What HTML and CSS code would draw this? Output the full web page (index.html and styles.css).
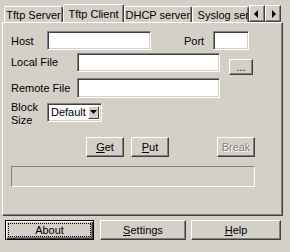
FILE: index.html
```html
<!DOCTYPE html>
<html lang="en">
<head>
  <meta charset="UTF-8" />
  <title>Tftpd</title>
  <link rel="stylesheet" href="styles.css">
</head>
<body>
  <div class="window">
    <div class="tabs">
      <div class="tab t-server">Tftp Server</div>
      <div class="tab t-client selected">Tftp Client</div>
      <div class="tab t-dhcp">DHCP server</div>
      <div class="tab t-syslog">Syslog server</div>
    </div>
    <div class="tab-scroll">
      <div class="scroll-btn">
        <svg width="14" height="14" viewBox="0 0 14 14"><polygon points="4,7 8,3 8,11" fill="#000"/></svg>
      </div>
      <div class="scroll-btn">
        <svg width="14" height="14" viewBox="0 0 14 14"><polygon points="6,3 10,7 6,11" fill="#000"/></svg>
      </div>
    </div>

    <div class="panel">
      <div class="row row-host">
        <label class="lbl lbl-host">Host</label>
        <input class="field host-field" type="text">
        <label class="lbl lbl-port">Port</label>
        <input class="field port-field" type="text">
      </div>
      <div class="row row-local">
        <label class="lbl lbl-file">Local File</label>
        <input class="field file-field" type="text">
        <button class="btn browse-btn">...</button>
      </div>
      <div class="row row-remote">
        <label class="lbl lbl-file">Remote File</label>
        <input class="field file-field remote" type="text">
      </div>
      <div class="row row-block">
        <label class="lbl lbl-block">Block<br>Size</label>
        <div class="combo">
          <span class="combo-text">Default</span>
          <span class="combo-btn">
            <svg width="9" height="5" viewBox="0 0 9 5"><polygon points="1,0 8,0 4.5,4" fill="#000"/></svg>
          </span>
        </div>
      </div>
      <div class="row row-actions">
        <button class="btn act-btn"><u>G</u>et</button>
        <button class="btn act-btn put-btn"><u>P</u>ut</button>
        <button class="btn act-btn break-btn" disabled>Break</button>
      </div>
      <div class="progress"></div>
    </div>

    <div class="footer">
      <button class="btn foot-btn about-btn"><span class="focus">About</span></button>
      <button class="btn foot-btn settings-btn"><u>S</u>ettings</button>
      <button class="btn foot-btn help-btn"><u>H</u>elp</button>
    </div>
  </div>
</body>
</html>
```

FILE: styles.css
```css
body {
  margin: 0;
  background-color: #d4d0c8;
  font-family: 'Liberation Sans', Arial, sans-serif;
  font-size: 11px;
  color: #000;
}

.window {
  position: relative;
  width: 290px;
  height: 252px;
}

/* tab strip */
.tabs {
  display: flex;
  align-items: flex-end;
  height: 22px;
  padding-left: 4px;
  width: 245px;
  overflow: hidden;
}

.tab {
  box-sizing: border-box;
  height: 16px;
  padding-top: 2px;
  text-align: center;
  white-space: nowrap;
  overflow: hidden;
  border-left: 1px solid #fff;
  border-top: 1px solid #fff;
  border-right: 1px solid #404040;
  box-shadow: inset -1px 0 #808080;
  border-radius: 2px 2px 0 0;
}

.t-server { width: 62px; }
.t-client { width: 64px; }
.t-dhcp { width: 71px; }
.t-syslog { width: 60px; text-align: left; padding-left: 5px; }

.tab.selected {
  position: relative;
  z-index: 1;
  height: 19px;
  margin-bottom: -1px;
  padding-top: 3px;
  background-color: #d4d0c8;
}

.tab-scroll {
  position: absolute;
  left: 249px;
  top: 5px;
  display: flex;
}

.scroll-btn {
  box-sizing: border-box;
  width: 16px;
  height: 17px;
  border: 1px solid;
  border-color: #fff #404040 #404040 #fff;
  box-shadow: inset -1px -1px #808080;
  display: flex;
  align-items: center;
  justify-content: center;
}

/* tab page */
.panel {
  box-sizing: border-box;
  margin-left: 2px;
  width: 281px;
  height: 194px;
  padding: 8px 0 0 8px;
  border: 1px solid;
  border-color: #fff #404040 #404040 #fff;
  box-shadow: inset -1px -1px #808080;
}

.row {
  display: flex;
  align-items: center;
}

.lbl {
  white-space: nowrap;
}

.field {
  box-sizing: border-box;
  margin: 0;
  padding: 0 3px;
  height: 19px;
  background: #fff;
  font: inherit;
  border: 1px solid;
  border-color: #808080 #fff #fff #808080;
  box-shadow: inset 1px 1px #404040, inset -1px -1px #d4d0c8;
  outline: none;
}

.lbl-host { width: 36px; }
.host-field { width: 104px; }
.lbl-port { width: 29px; margin-left: 33px; }
.port-field { width: 36px; }

.row-local { margin-top: 3px; align-items: flex-start; }
.row-local .lbl { line-height: 19px; }
.lbl-file { width: 66px; }
.file-field { width: 143px; }
.row-remote { margin-top: 3px; }
.file-field.remote { height: 20px; }

.btn {
  box-sizing: border-box;
  margin: 0;
  padding: 0;
  background-color: #d4d0c8;
  font: inherit;
  color: #000;
  border: 1px solid;
  border-color: #fff #404040 #404040 #fff;
  box-shadow: inset -1px -1px #808080;
}

.browse-btn {
  width: 24px;
  height: 16px;
  margin: 6px 0 0 9px;
  line-height: 10px;
}

.row-block { margin-top: 3px; align-items: flex-start; }
.lbl-block { width: 36px; line-height: 13px; }

.combo {
  box-sizing: border-box;
  display: flex;
  align-items: stretch;
  width: 55px;
  height: 19px;
  margin-top: 2px;
  background: #fff;
  border: 1px solid;
  border-color: #808080 #fff #fff #808080;
  box-shadow: inset 1px 1px #404040, inset -1px -1px #d4d0c8;
  padding: 2px;
}

.combo-text {
  flex: 1;
  line-height: 13px;
  padding-left: 1px;
}

.combo-btn {
  box-sizing: border-box;
  width: 11px;
  background: #d4d0c8;
  border: 1px solid;
  border-color: #fff #404040 #404040 #fff;
  display: flex;
  align-items: center;
  justify-content: center;
}

.row-actions { margin: 10px 0 0 75px; }

.act-btn {
  width: 38px;
  height: 20px;
}

.put-btn { margin-left: 7px; }
.break-btn { margin-left: 48px; color: #808080; text-shadow: 1px 1px #fff; }

.progress {
  box-sizing: border-box;
  width: 244px;
  height: 21px;
  margin-top: 9px;
  border: 1px solid;
  border-color: #808080 #fff #fff #808080;
}

/* bottom buttons */
.footer {
  display: flex;
  margin: 4px 0 0 5px;
}

.foot-btn {
  height: 20px;
}

.about-btn {
  width: 89px;
  border: 1px solid #000;
  box-shadow: inset 1px 1px #fff, inset -1px -1px #404040, inset -2px -2px #808080;
  padding: 3px;
}

.focus {
  display: block;
  height: 12px;
  line-height: 12px;
  outline: 1px dotted #000;
}

.settings-btn { width: 86px; margin-left: 6px; }
.help-btn { width: 90px; margin-left: 5px; }
```
